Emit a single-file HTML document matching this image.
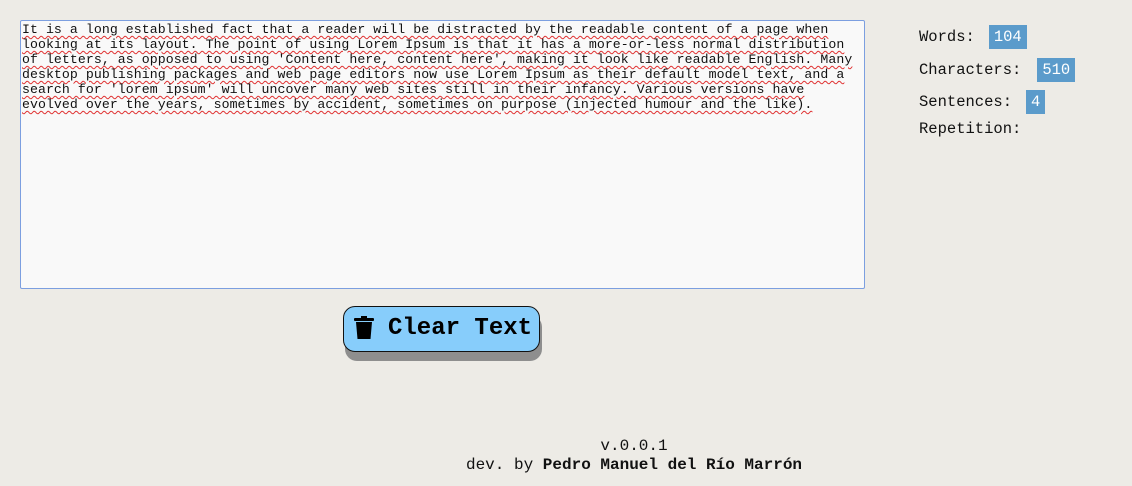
<!DOCTYPE html>
<html><head><meta charset="utf-8"><style>
body{margin:0;width:1132px;height:486px;background:#edebe6;font-family:"Liberation Mono",monospace;position:relative;overflow:hidden}
.ta{position:absolute;left:20px;top:20px;width:842px;height:266px;border:1px solid #7c9fe0;background:#f9f9f9;border-radius:2px;font-size:13.2px;letter-spacing:0.07px;line-height:15px;color:#111;padding:1px 0 0 1px;box-sizing:content-box;white-space:nowrap}
.ta span{text-decoration:underline wavy #e03030;text-decoration-thickness:1px;text-underline-offset:2px}
.st{position:absolute;left:919px;font-size:15.5px;color:#111}
.b{background:#5b9bcb;color:#fff;padding:3px 5px}
.btn{position:absolute;left:343px;top:306px;width:197px;height:46px;border:1px solid #111;border-radius:12px;background:#87cdfb;box-shadow:2px 9px 0 #8e8e8e;font-weight:bold;font-size:24px;line-height:44px;box-sizing:border-box}
.ft{position:absolute;width:100%;text-align:center;font-size:16px;color:#111}
</style></head><body>
<div class="ta"><span>It is a long established fact that a reader will be distracted by the readable content of a page when</span><br><span>looking at its layout. The point of using Lorem Ipsum is that it has a more-or-less normal distribution</span><br><span>of letters, as opposed to using 'Content here, content here', making it look like readable English. Many</span><br><span>desktop publishing packages and web page editors now use Lorem Ipsum as their default model text, and a</span><br><span>search for 'lorem ipsum' will uncover many web sites still in their infancy. Various versions have</span><br><span>evolved over the years, sometimes by accident, sometimes on purpose (injected humour and the like).</span></div>
<div class="st" style="top:28px">Words:<span class="b" style="margin-left:14px">104</span></div>
<div class="st" style="top:61px">Characters:<span class="b" style="margin-left:16px">510</span></div>
<div class="st" style="top:93px">Sentences:<span class="b" style="margin-left:14px">4</span></div>
<div class="st" style="top:120px">Repetition:</div>
<div class="btn"><svg style="position:absolute;left:9px;top:9px" width="22" height="24" viewBox="0 0 22 24"><rect x="1" y="2" width="20" height="3" rx="1"/><rect x="8" y="0" width="6" height="3"/><path d="M3 6h16l-1.5 17h-13z"/></svg><span style="position:absolute;left:44px;top:0px">Clear Text</span></div>
<div class="ft" style="top:437px;left:68px">v.0.0.1</div>
<div class="ft" style="top:456px;left:68px">dev. by <b>Pedro Manuel del Río Marrón</b></div>
</body></html>
